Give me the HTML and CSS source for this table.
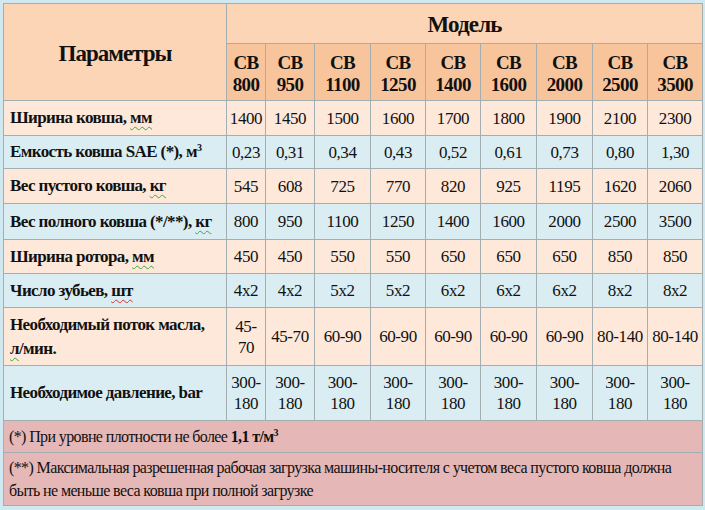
FILE: index.html
```html
<!DOCTYPE html>
<html>
<head>
<meta charset="utf-8">
<title>Модель</title>
<link rel="stylesheet" href="styles.css">
</head>
<body>
<table class="spec">
  <colgroup>
    <col class="c-param">
    <col class="c-narrow">
    <col class="c-mid">
    <col class="c-56"><col class="c-55"><col class="c-55"><col class="c-56"><col class="c-56"><col class="c-55"><col class="c-55">
  </colgroup>
  <tr class="h1">
    <th class="param-head" rowspan="2">Параметры</th>
    <th class="model-head" colspan="9">Модель</th>
  </tr>
  <tr class="h2">
    <th class="model">CB<br>800</th>
    <th class="model">CB<br>950</th>
    <th class="model">CB<br>1100</th>
    <th class="model">CB<br>1250</th>
    <th class="model">CB<br>1400</th>
    <th class="model">CB<br>1600</th>
    <th class="model">CB<br>2000</th>
    <th class="model">CB<br>2500</th>
    <th class="model">CB<br>3500</th>
  </tr>
  <tr class="peach r35">
    <td class="name">Ширина ковша, <span class="sp-g">мм</span></td>
    <td>1400</td><td>1450</td><td>1500</td><td>1600</td><td>1700</td><td>1800</td><td>1900</td><td>2100</td><td>2300</td>
  </tr>
  <tr class="blue r33">
    <td class="name">Емкость ковша SAE (*), м<sup>3</sup></td>
    <td>0,23</td><td>0,31</td><td>0,34</td><td>0,43</td><td>0,52</td><td>0,61</td><td>0,73</td><td>0,80</td><td>1,30</td>
  </tr>
  <tr class="peach r35">
    <td class="name">Вес пустого ковша, <span class="sp-g">кг</span></td>
    <td>545</td><td>608</td><td>725</td><td>770</td><td>820</td><td>925</td><td>1195</td><td>1620</td><td>2060</td>
  </tr>
  <tr class="blue r36">
    <td class="name">Вес полного ковша (*/**), <span class="sp-g">кг</span></td>
    <td>800</td><td>950</td><td>1100</td><td>1250</td><td>1400</td><td>1600</td><td>2000</td><td>2500</td><td>3500</td>
  </tr>
  <tr class="peach r34">
    <td class="name">Ширина ротора, <span class="sp-g">мм</span></td>
    <td>450</td><td>450</td><td>550</td><td>550</td><td>650</td><td>650</td><td>650</td><td>850</td><td>850</td>
  </tr>
  <tr class="blue r34">
    <td class="name">Число зубьев, <span class="sp-r">шт</span></td>
    <td>4x2</td><td>4x2</td><td>5x2</td><td>5x2</td><td>6x2</td><td>6x2</td><td>6x2</td><td>8x2</td><td>8x2</td>
  </tr>
  <tr class="peach r58">
    <td class="name">Необходимый поток масла,<br><span class="sp-g">л</span>/мин.</td>
    <td>45-<br>70</td><td>45-70</td><td>60-90</td><td>60-90</td><td>60-90</td><td>60-90</td><td>60-90</td><td>80-140</td><td>80-140</td>
  </tr>
  <tr class="blue r55">
    <td class="name">Необходимое давление, bar</td>
    <td>300-<br>180</td><td>300-<br>180</td><td>300-<br>180</td><td>300-<br>180</td><td>300-<br>180</td><td>300-<br>180</td><td>300-<br>180</td><td>300-<br>180</td><td>300-<br>180</td>
  </tr>
  <tr class="note r32">
    <td class="note-text" colspan="10">(*) При уровне плотности не более <b>1,1 т/м<sup>3</sup></b></td>
  </tr>
  <tr class="note r53">
    <td class="note-text" colspan="10">(**) Максимальная разрешенная рабочая загрузка машины-носителя с учетом веса пустого ковша должна<br>быть не меньше веса ковша при полной загрузке</td>
  </tr>
</table>
</body>
</html>
```

FILE: styles.css
```css
html, body {
  margin: 0;
  padding: 0;
  background: #d0e8f0;
}

body {
  padding: 3px 0 0 3px;
  font-family: "Liberation Serif", serif;
  color: #111;
}

.spec {
  border-collapse: collapse;
  table-layout: fixed;
  width: 700px;
  border: 1px solid #9fb0b6;
}

.c-param { width: 223px; }
.c-narrow { width: 39px; }
.c-mid { width: 49px; }
.c-56 { width: 56px; }
.c-55 { width: 55px; }

.spec th,
.spec td {
  border: 1px solid #a3aeb1;
  padding: 0;
  text-align: center;
  vertical-align: middle;
  font-family: "Liberation Serif", serif;
  font-size: 17px;
  line-height: 21px;
  letter-spacing: -0.4px;
  white-space: nowrap;
}

.h1 { height: 40px; }
.h2 { height: 57px; }

.spec th.param-head {
  background: #fbd5b5;
  font-size: 23px;
  letter-spacing: -1px;
  font-weight: bold;
  padding-top: 2px;
}

.spec th.model-head {
  background: #fbd5b5;
  font-size: 23px;
  letter-spacing: -0.8px;
  font-weight: bold;
  padding-top: 2px;
}

.spec th.model {
  background: #f8c49c;
  font-weight: bold;
  font-size: 19px;
  letter-spacing: -0.6px;
  line-height: 22px;
  padding-top: 3px;
}

.peach td { background: #fde8da; }
.blue td { background: #daedf3; }

.r32 { height: 32px; }
.r33 { height: 33px; }
.r34 { height: 34px; }
.r35 { height: 35px; }
.r36 { height: 36px; }
.r53 { height: 53px; }
.r55 { height: 55px; }
.r58 { height: 58px; }

.spec td.name {
  text-align: left;
  font-weight: bold;
  font-size: 17px;
  letter-spacing: -0.6px;
  padding-left: 6px;
  line-height: 24px;
}

sup {
  font-size: 10px;
  line-height: 0;
  vertical-align: 6px;
}

.sp-g {
  text-decoration: underline wavy #3ea83e;
  text-decoration-thickness: 1px;
  text-underline-offset: 3px;
}

.sp-r {
  text-decoration: underline wavy #e03030;
  text-decoration-thickness: 1px;
  text-underline-offset: 3px;
}

.note td {
  background: #e5b8b7;
}

.spec td.note-text {
  text-align: left;
  padding-left: 5px;
  font-size: 16px;
  letter-spacing: -0.62px;
  line-height: 23px;
}
```
